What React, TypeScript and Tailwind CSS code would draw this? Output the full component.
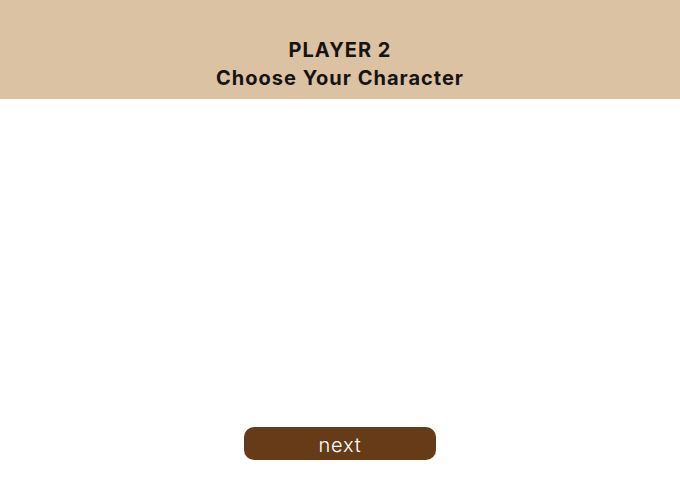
export default function App() {
  return (
    <div className="flex h-[480px] w-[680px] flex-col bg-white font-['Inter',sans-serif]">
      <header className="flex h-[99px] flex-col items-center justify-end bg-[#dbc2a3] pb-[7px] text-[20px] font-bold leading-[28px] text-[#161412]">
        <h1 className="tracking-[1px]">PLAYER 2</h1>
        <h2 className="tracking-[1px]">Choose Your Character</h2>
      </header>

      {/* character grid would go here */}
      <main className="flex-1" />

      <div className="flex justify-center pb-[20px]">
        <button className="h-[33px] w-[192px] rounded-[10px] bg-[#653c17] pt-[2px] text-[20px] font-light tracking-[0.8px] text-white">
          next
        </button>
      </div>
    </div>
  )
}
